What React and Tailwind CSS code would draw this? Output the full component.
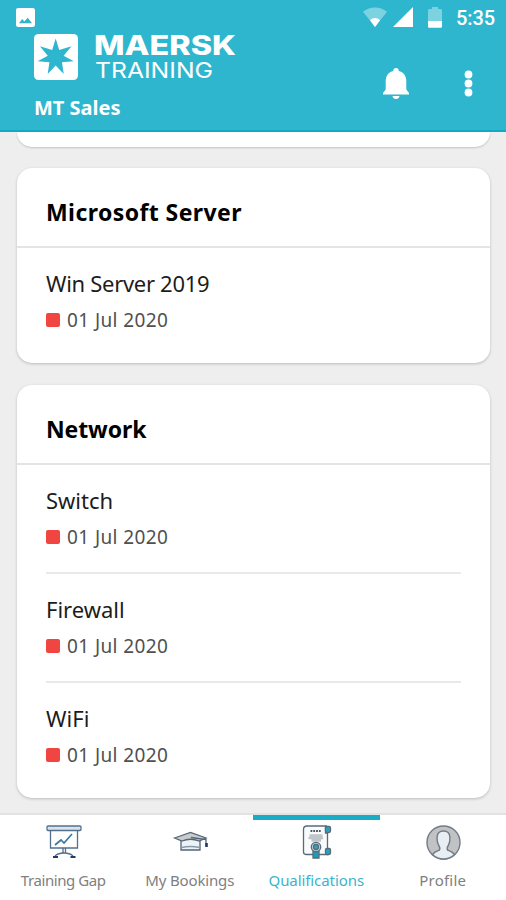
const groups = [
    {
        title: 'Microsoft Server',
        titleStyle: 'tracking-[0.42px]',
        items: [{ name: 'Win Server 2019', style: 'tracking-[-0.3px]', date: '01 Jul 2020' }],
    },
    {
        title: 'Network',
        titleStyle: 'tracking-[-0.1px]',
        items: [
            { name: 'Switch', style: 'tracking-[0px]', date: '01 Jul 2020' },
            { name: 'Firewall', style: 'tracking-[0px]', date: '01 Jul 2020' },
            { name: 'WiFi', style: 'tracking-[0.1px]', date: '01 Jul 2020' },
        ],
    },
];

const StatusBar = () => (
    <div className="flex h-[34px] items-start justify-between pl-4 pr-[10px] text-white">
        <svg className="mt-2 h-[19px] w-[19px]" viewBox="0 0 19 19">
            <rect width="19" height="19" rx="2.2" fill="#fff" />
            <path d="M3 15.2 6.2 11l2.2 2.5 3.3-3.7 4.4 5.4z" fill="#2eb6cf" />
        </svg>
        <div className="flex items-start">
            <svg className="mt-[7px] h-5 w-[24px]" viewBox="0 0 24 20">
                <path d="M0 4.8C7-1.1 17-1.1 24 4.8L12 20z" fill="#fff" opacity=".38" />
                <path d="M7 13.2c3-2.8 7-2.8 10 0L12 20z" fill="#fff" />
            </svg>
            <svg className="ml-[6px] mt-[7px] h-5 w-5" viewBox="0 0 20 20">
                <path d="M20 0v20H0z" fill="#fff" />
            </svg>
            <svg className="ml-[15px] mt-[7px] h-[21px] w-[14px]" viewBox="0 0 14 21">
                <path d="M4 0h6v2h2.5Q14 2 14 3.5V14H0V3.5Q0 2 1.5 2H4z" fill="#fff" opacity=".38" />
                <path d="M0 14h14v5.5q0 1.2-1.2 1.2H1.2Q0 20.7 0 19.5z" fill="#fff" />
            </svg>
            <span className="ml-[14px] mt-[6px] w-[40px] whitespace-nowrap font-['Roboto',sans-serif] text-[20px] font-medium leading-6 tracking-[-0.1px]">5:35</span>
        </div>
    </div>
);

const Logo = () => (
    <svg className="h-[48px] w-[206px] overflow-visible" viewBox="0 0 206 48">
        <rect x="0" y="0" width="44" height="46" rx="4.5" fill="#fff" />
        <path
            d="M21.7 4.5 25.2 16 37.5 12.2 29.6 21.7 39.8 27.3 28 28.3 29.7 40 21.7 31.5 13.7 40 15.4 28.3 3.6 27.3 13.8 21.7 5.900 12.2 18.2 16z"
            fill="#2eb6cf"
        />
        <text x="60" y="21" textLength="142" lengthAdjust="spacingAndGlyphs" fill="#fff" fontFamily="Inter, sans-serif" fontWeight="800" fontSize="26.5">MAERSK</text>
        <text x="61" y="44" textLength="118" lengthAdjust="spacingAndGlyphs" fill="#fff" fontFamily="Inter, sans-serif" fontWeight="400" fontSize="22">TRAINING</text>
    </svg>
);

const Header = () => (
    <header className="h-[132px] shrink-0 border-b-2 border-[#12a9c3] bg-[#2eb6cf]">
        <StatusBar />
        <div className="flex justify-between pl-[34px] pr-[33px]">
            <div>
                <Logo />
                <div className="mt-[12px] text-[20px] font-bold leading-7 tracking-[0px] text-white">MT Sales</div>
            </div>
            <div className="flex pt-[34px]">
                <svg className="h-[31px] w-[26px]" viewBox="0 0 26 31">
                    <path
                        d="M13 0c1.8 0 2.8 1.2 2.8 3C20.5 4.200 23.300 8 23.300 13v8.500L26 25v1.500H0V25l2.700-3.500V13C2.700 8 5.500 4.200 10.200 3 10.200 1.200 11.200 0 13 0zM9.500 28h7c-.3 2-1.500 3-3.500 3s-3.200-1-3.500-3z"
                        fill="#fff"
                    />
                </svg>
                <svg className="ml-[55px] mt-[2px] h-[27px] w-[9px]" viewBox="0 0 9 27" fill="#fff">
                    <circle cx="4.500" cy="4.500" r="3.900" />
                    <circle cx="4.500" cy="13.500" r="3.900" />
                    <circle cx="4.500" cy="22.500" r="3.900" />
                </svg>
            </div>
        </div>
    </header>
);

const GroupCard = ({ group }) => (
    <section className="rounded-[15px] bg-white pb-[6px] shadow-[0_1px_3px_rgba(0,0,0,0.22)]">
        <h2 className={`h-[80px] border-b-2 border-[#e4e4e4] pl-[29px] pt-[28px] text-[23px] font-bold leading-8 text-black ${group.titleStyle}`}>
            {group.title}
        </h2>
        <ul className="px-[29px]">
            {group.items.map((item) => (
                <li key={item.name} className="h-[109px] border-b-2 border-[#e9e9e9] pt-[19px] last:border-b-0">
                    <p className={`h-8 text-[22px] leading-8 text-[#1c1c1c] ${item.style}`}>{item.name}</p>
                    <div className="mt-[8px] flex h-[26px] items-center">
                        <span className="h-[14px] w-[14px] rounded-[2px] bg-[#f04540]" />
                        <span className="ml-[7px] text-[19px] leading-[26px] tracking-[0.4px] text-[#505050]">{item.date}</span>
                    </div>
                </li>
            ))}
        </ul>
    </section>
);

const BoardIcon = () => (
    <svg className="h-[34px] w-[36px]" viewBox="0 0 36 34" fill="none" stroke="#52708c" strokeWidth="1.300">
        <path d="M4.500 5v18h27V5" />
        <rect x="1" y="1" width="34" height="4.500" rx="1" fill="#d9e5ec" />
        <path d="M17 23v5M19.500 23v5M9 31c2-2 5-3 9-3s7 1 9 3" />
        <path d="M7 32h5M24.500 32h5" stroke="#253b66" strokeWidth="2" />
        <path d="M9 20l6-5 3 3 8-9" stroke="#3a79a4" strokeWidth="1.700" />
    </svg>
);

const CapIcon = () => (
    <svg className="h-[34px] w-[36px]" viewBox="0 0 36 34" fill="none" stroke="#536579" strokeWidth="1.300">
        <path d="M8 15v10h19V15" fill="#edf2f5" />
        <path d="M8.500 22.500q9-2 18 0" stroke="#8a9aa7" />
        <path d="M1.500 13 17.500 7.500 33 13l-7 3q-8.500-3.500-17 0z" fill="#c9cbcb" />
        <path d="M18 12.500l15 2V20" />
        <path d="M33.500 18v4" stroke="#253b66" strokeWidth="2.600" />
    </svg>
);

const CertificateIcon = () => (
    <svg className="h-[34px] w-[36px]" viewBox="0 0 36 34" fill="none" stroke="#596b7a" strokeWidth="1.300">
        <path d="M28 1H8Q4.500 1 4.500 4.500V27q0 2.500 3 2.500h21V8h-2V1" fill="#f8fafb" />
        <rect x="26.500" y="1.500" width="5" height="6" rx="1.500" fill="#20a6be" />
        <rect x="26.500" y="23.500" width="5" height="6" rx="1.500" fill="#20a6be" />
        <path d="M11.500 6h11" stroke="#465361" strokeWidth="1.800" strokeDasharray="1.800 1" />
        <path d="M10.500 10.500h13M9.500 13h14.500M12.500 15.500h9.500" stroke="#bfc5ca" strokeWidth="2.500" />
        <path d="M14 25v8h6v-8z" fill="#209bb4" />
        <circle cx="17" cy="22" r="4.700" fill="#c4d3d9" />
        <circle cx="17" cy="22" r="2.500" fill="#25a9c0" />
    </svg>
);

const ProfileIcon = () => (
    <svg className="h-[35px] w-[35px]" viewBox="0 0 35 35" stroke="#727c86" strokeWidth="1.400">
        <circle cx="17.500" cy="17.500" r="16.500" fill="#c0c2c3" />
        <path
            d="M6.500 29.500c2-3 5-3.500 7-4.500.8-1.500 0-3.500-1-5-1.400-2.500-1.600-5.500-1.400-8C11.400 8 14 6 17.500 6s6.100 2 6.400 6c.2 2.500 0 5.500-1.400 8-1 1.500-1.800 3.500-1 5 2 1 5 1.500 7 4.500-6.500 6-15.500 6-22 0z"
            fill="#e9eef4"
        />
    </svg>
);

const tabs = [
    { label: 'Training Gap', icon: <BoardIcon />, style: 'tracking-[-0.42px]' },
    { label: 'My Bookings', icon: <CapIcon />, style: 'tracking-[-0.15px]' },
    { label: 'Qualifications', icon: <CertificateIcon />, style: 'tracking-[-0.08px]', active: true },
    { label: 'Profile', icon: <ProfileIcon />, style: 'tracking-[0.2px]' },
];

const BottomNav = () => (
    <nav className="grid h-[87px] shrink-0 grid-cols-4 border-t-2 border-[#e2e2e2] bg-white">
        {tabs.map((tab) => (
            <button
                key={tab.label}
                className={`flex flex-col items-center border-t-[5px] pt-[4px] ${tab.active ? 'border-[#18adc5] text-[#39b5cc]' : 'border-transparent text-[#808080]'}`}
            >
                <span className="flex h-[36px] items-center pl-[2px]">{tab.icon}</span>
                <span className={`mt-[10px] whitespace-nowrap text-[15px] leading-5 ${tab.style}`}>{tab.label}</span>
            </button>
        ))}
    </nav>
);

export default function App() {
    return (
        <div className="flex h-[900px] w-[506px] flex-col overflow-hidden bg-[#eeeeee] font-['Noto_Sans',sans-serif]">
            <Header />
            <main className="min-h-0 flex-1 overflow-hidden pl-[17px] pr-[16px]">
                <div className="h-[15px] rounded-b-[15px] bg-white shadow-[0_1px_2px_rgba(0,0,0,0.18)]" />
                <div className="mt-[21px] flex flex-col gap-[22px]">
                    {groups.map((group) => (
                        <GroupCard key={group.title} group={group} />
                    ))}
                </div>
            </main>
            <BottomNav />
        </div>
    );
}
